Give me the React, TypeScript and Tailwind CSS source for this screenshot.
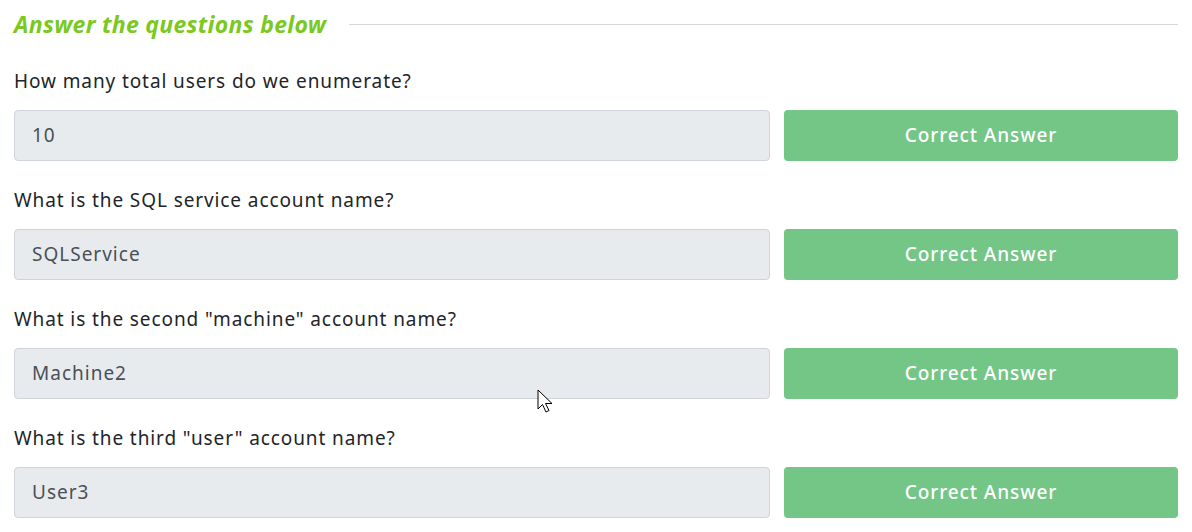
import React from "react";

const qs = [
  { q: "How many total users do we enumerate?", a: "10" },
  { q: "What is the SQL service account name?", a: "SQLService" },
  { q: 'What is the second "machine" account name?', a: "Machine2" },
  { q: 'What is the third "user" account name?', a: "User3" },
];

export default function App() {
  return (
    <div className="w-[1192px] h-[532px] bg-white overflow-hidden relative" style={{ fontFamily: '"Noto Sans", "Open Sans", sans-serif' }}>
      <div className="pl-[14px] pr-[14px]">
        <div className="flex items-center h-[48px] gap-[23px]">
          <div className="text-[23px] font-bold italic text-[#7bc81e] tracking-[0.3px] leading-none">Answer the questions below</div>
          <div className="flex-1 h-px bg-[#d6d6d6]" />
        </div>
        {qs.map((item, i) => (
          <div key={i}>
            <div className="h-[62px] pt-[5px] flex items-center text-[19px] text-[#212529] tracking-[0.9px]">{item.q}</div>
            <div className="flex gap-[14px] h-[51px] mb-[6px]">
              <div className="w-[756px] h-[51px] bg-[#e8ebee] border border-[#ced4da] rounded-[4px] flex items-center pl-[17px] text-[19px] text-[#495057] tracking-[1px]">
                {item.a}
              </div>
              <div className="flex-1 h-[51px] bg-[#73c686] rounded-[4px] flex items-center justify-center text-white text-[19px] font-medium tracking-[0.9px]">
                Correct Answer
              </div>
            </div>
          </div>
        ))}
      </div>
      <svg className="absolute left-[537px] top-[389px]" width="20" height="28" viewBox="0 0 20 28">
        <path d="M1 1 L1 20 L5.5 15.5 L9 23 L12 21.5 L8.5 14.5 L15 14.5 Z" fill="white" stroke="black" strokeWidth="1" strokeLinejoin="round" />
      </svg>
    </div>
  );
}
